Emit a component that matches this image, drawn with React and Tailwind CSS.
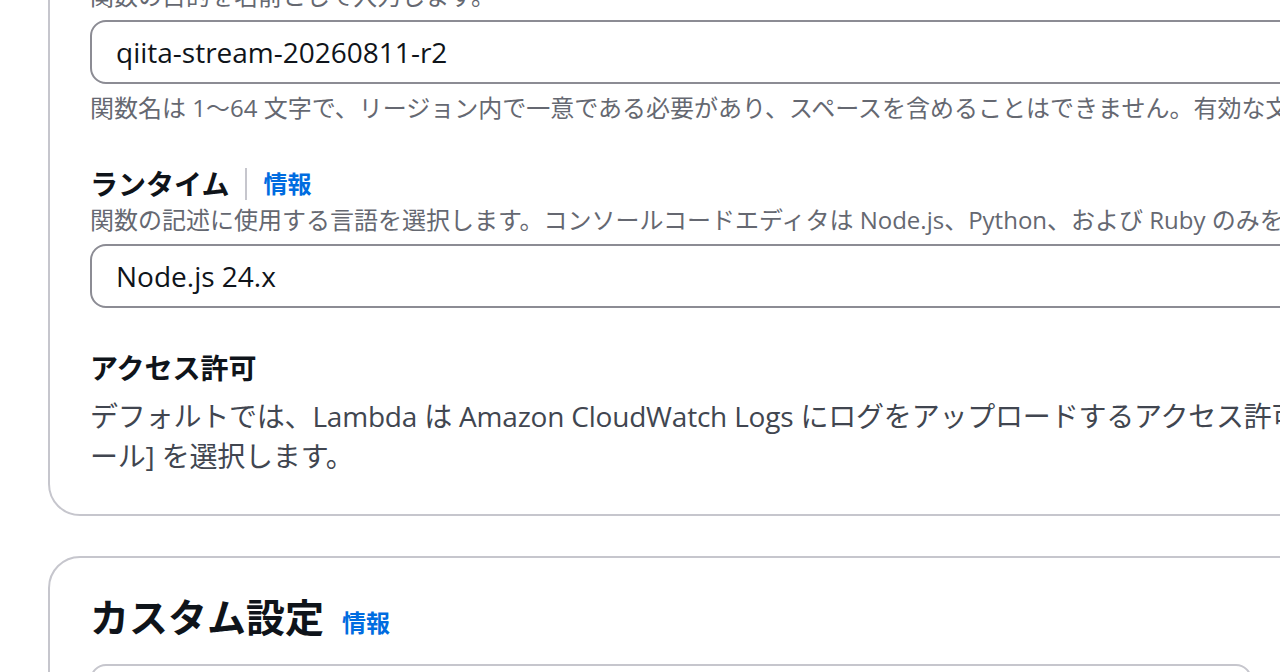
import React from "react";

const FONT = "font-['Open_Sans','Noto_Sans_CJK_JP',sans-serif]";

function InfoLink({ className = "" }) {
  return <span className={`text-[24px] font-bold text-[#006ce0] ${className}`}>情報</span>;
}

function TextInput({ value }) {
  return (
    <div className="mt-2 flex h-[64px] items-center rounded-[16px] border-2 border-[#8c8c94] bg-white px-[24px]">
      <span className="text-[28px] text-[#0f141a]">{value}</span>
    </div>
  );
}

export default function App() {
  return (
    <div className={`h-[672px] w-[1280px] overflow-hidden bg-white ${FONT}`}>
      <div className="ml-[48px] mt-[-62px] w-[1400px]">
        {/* Basic info card */}
        <div className="rounded-[32px] border-2 border-[#c6c6cd] bg-white px-[40px] pt-[40px] pb-[38px] whitespace-nowrap">
          {/* Function name */}
          <p className="text-[24px] leading-[32px] text-[#656871]">関数の目的を名前として入力します。</p>
          <TextInput value="qiita-stream-20260811-r2" />
          <p className="mt-2 text-[24px] leading-[32px] text-[#656871]">
            関数名は 1〜64 文字で、リージョン内で一意である必要があり、スペースを含めることはできません。有効な文字は a-z、A-Z、0-9、ハイフン (-)、およびアンダースコア (_) です。
          </p>

          {/* Runtime */}
          <div className="mt-10 flex h-[40px] items-center">
            <span className="text-[28px] font-bold leading-[40px] text-[#0f141a]">ランタイム</span>
            <span className="mx-[16px] h-[32px] w-[2px] bg-[#c6c6cd]" />
            <InfoLink />
          </div>
          <p className="text-[24px] leading-[32px] text-[#656871]">
            関数の記述に使用する言語を選択します。コンソールコードエディタは Node.js、Python、および Ruby のみをサポートしています。
          </p>
          <TextInput value="Node.js 24.x" />

          {/* Permissions */}
          <h3 className="mt-10 text-[28px] font-bold leading-[40px] text-[#0f141a]">アクセス許可</h3>
          <div className="mt-2 text-[28px] leading-[40px] tracking-[-0.2px] text-[#414650]">
            <p>
              デフォルトでは、Lambda は Amazon CloudWatch Logs にログをアップロードするアクセス許可を持つ実行ロールを作成します。このデフォルトのロールは、後でトリガーを追加するときにカスタマイズできます。[新しいロ
            </p>
            <p>ール] を選択します。</p>
          </div>
        </div>

        {/* Custom settings card */}
        <div className="mt-[40px] h-[400px] rounded-[32px] border-2 border-[#c6c6cd] bg-white px-[40px] pt-[35px]">
          <div className="flex h-[48px] items-baseline">
            <h2 className="text-[39px] font-bold leading-[48px] text-[#0f141a]">カスタム設定</h2>
            <InfoLink className="ml-[18px]" />
          </div>
          <div className="mt-[23px] h-[200px] w-[1162px] rounded-[16px] border-2 border-[#c6c6cd]" />
        </div>
      </div>
    </div>
  );
}
